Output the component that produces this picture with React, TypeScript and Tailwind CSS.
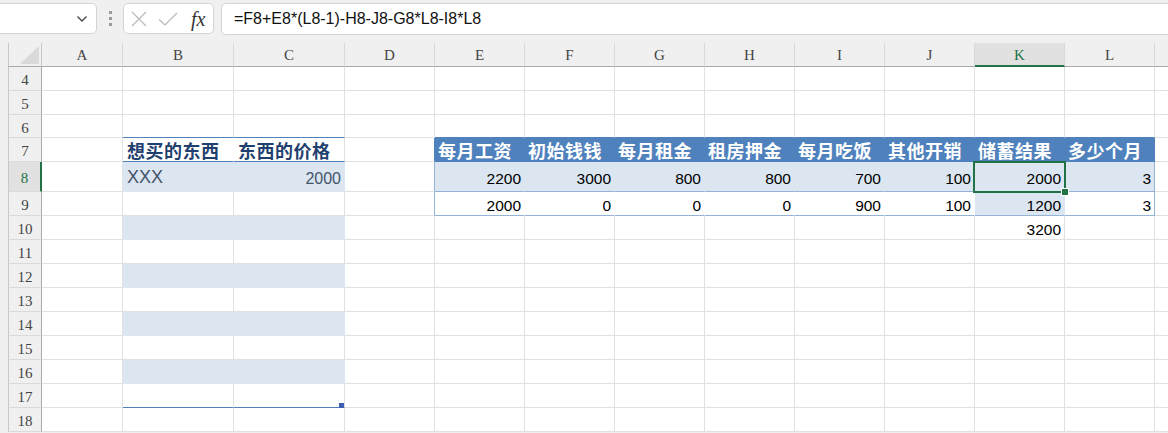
import React from "react";

interface Col {
    key: string;
    w: number;
}

interface Row {
    n: number;
    h: number;
}

const COLS: Col[] = [
    { key: "A", w: 81 },
    { key: "B", w: 111 },
    { key: "C", w: 111 },
    { key: "D", w: 90 },
    { key: "E", w: 90 },
    { key: "F", w: 90 },
    { key: "G", w: 90 },
    { key: "H", w: 90 },
    { key: "I", w: 90 },
    { key: "J", w: 90 },
    { key: "K", w: 90 },
    { key: "L", w: 90 },
];

const ROWS: Row[] = [
    { n: 4, h: 24 },
    { n: 5, h: 24 },
    { n: 6, h: 23 },
    { n: 7, h: 24 },
    { n: 8, h: 30 },
    { n: 9, h: 24 },
    { n: 10, h: 24 },
    { n: 11, h: 24 },
    { n: 12, h: 24 },
    { n: 13, h: 24 },
    { n: 14, h: 24 },
    { n: 15, h: 24 },
    { n: 16, h: 24 },
    { n: 17, h: 24 },
    { n: 18, h: 24 },
];

const TABLE_COLS = ["E", "F", "G", "H", "I", "J", "K", "L"];
const HEADERS = ["每月工资", "初始钱钱", "每月租金", "租房押金", "每月吃饭", "其他开销", "储蓄结果", "多少个月"];
const ROW8 = ["2200", "3000", "800", "800", "700", "100", "2000", "3"];
const ROW9 = ["2000", "0", "0", "0", "900", "100", "1200", "3"];

const GRID = "#e1e1e1";
const BLUE = "#4f81bd";
const LIGHT = "#dce6f1";
const LINE = "#95b3d7";

type Kind = "head" | "num" | "text" | "bcHead" | "none";

interface CellInfo {
    bg: string;
    br: string;
    bb: string;
    text?: string;
    kind: Kind;
    color?: string;
    size?: string;
}

function getCell(r: number, c: string): CellInfo {
    const cell: CellInfo = { bg: "#ffffff", br: GRID, bb: GRID, kind: "none" };
    const inBC = c === "B" || c === "C";
    const ti = TABLE_COLS.indexOf(c);

    // left-hand list (B/C)
    if (inBC) {
        if (r === 6) cell.bb = BLUE;
        if (r === 7) {
            cell.bb = BLUE;
            if (c === "B") cell.br = "#ffffff";
            cell.kind = "bcHead";
            cell.text = c === "B" ? "想买的东西" : "东西的价格";
        }
        if ([8, 10, 12, 14, 16].includes(r)) {
            cell.bg = LIGHT;
            cell.br = LIGHT;
            cell.bb = LIGHT;
        }
        if (r === 8) {
            cell.text = c === "B" ? "XXX" : "2000";
            cell.kind = c === "B" ? "text" : "num";
            cell.color = "#44546a";
            cell.size = c === "B" ? "text-[18px]" : "text-[16px]";
        }
        if (r === 17) cell.bb = BLUE;
    }

    // table edge on column D
    if (c === "D") {
        if (r === 7) cell.br = BLUE;
        if (r === 8 || r === 9) cell.br = LINE;
    }

    // main table E..L
    if (ti >= 0) {
        if (r === 6) cell.bb = BLUE;
        if (r === 7) {
            cell.bg = BLUE;
            cell.br = BLUE;
            cell.bb = BLUE;
            cell.kind = "head";
            cell.text = HEADERS[ti];
        }
        if (r === 8) {
            cell.bg = LIGHT;
            cell.br = c === "L" ? LINE : LIGHT;
            cell.bb = LINE;
            cell.kind = "num";
            cell.text = ROW8[ti];
        }
        if (r === 9) {
            const k = c === "K";
            cell.bg = k ? LIGHT : "#ffffff";
            cell.br = c === "L" ? LINE : k ? LIGHT : "#ffffff";
            cell.bb = LINE;
            cell.kind = "num";
            cell.text = ROW9[ti];
        }
        if (r === 10 && c === "K") {
            cell.kind = "num";
            cell.text = "3200";
        }
    }
    return cell;
}

function Cell({ r, col, h }: { r: number; col: Col; h: number }) {
    const info = getCell(r, col.key);
    const selected = r === 8 && col.key === "K";
    const handle = r === 17 && col.key === "C";

    let content: React.ReactNode = null;
    if (info.kind === "head") {
        content = (
            <span className="pl-[3px] text-[18px] font-bold text-white font-['Noto_Sans_CJK_SC',sans-serif] leading-none tracking-[0.5px]">
                {info.text}
            </span>
        );
    } else if (info.kind === "bcHead") {
        content = (
            <span className="pl-[4px] text-[18px] font-bold text-[#1f3f6e] font-['Noto_Sans_CJK_SC',sans-serif] leading-none tracking-[0.5px]">
                {info.text}
            </span>
        );
    } else if (info.kind === "num") {
        content = (
            <span
                className={`ml-auto pr-[3px] font-['Liberation_Sans',sans-serif] leading-none pt-[4px] ${info.size ?? "text-[15.5px]"}`}
                style={{ color: info.color ?? "#000000" }}
            >
                {info.text}
            </span>
        );
    } else if (info.kind === "text") {
        content = (
            <span
                className={`pl-[4px] font-['Liberation_Sans',sans-serif] leading-none pt-[1px] ${info.size}`}
                style={{ color: info.color }}
            >
                {info.text}
            </span>
        );
    }

    return (
        <div
            className={`relative flex shrink-0 items-center border-r border-b whitespace-nowrap ${selected || handle ? "z-10" : ""}`}
            style={{
                width: col.w,
                height: h,
                backgroundColor: info.bg,
                borderRightColor: info.br,
                borderBottomColor: info.bb,
            }}
        >
            {content}
            {selected && (
                <div className="absolute top-[-1px] left-[-2px] w-[93px] h-[32px] border-2 border-[#217346] pointer-events-none">
                    <div className="absolute right-[-4px] bottom-[-4px] w-[6px] h-[6px] bg-[#217346] outline outline-1 outline-white" />
                </div>
            )}
            {handle && <div className="absolute right-[0px] bottom-[-1px] w-[5px] h-[5px] bg-[#3e5fb3]" />}
        </div>
    );
}

function FormulaBar() {
    return (
        <div className="h-[35px] flex items-start pt-[3px] bg-[#f0f0f0]">
            {/* Name box */}
            <div className="ml-[-6px] w-[103px] h-[31px] bg-white border border-[#d4d4d4] rounded-[5px] flex items-center justify-end pr-[8px]">
                <svg width="12" height="8" viewBox="0 0 12 8" fill="none">
                    <path d="M1.5 1.5 L6 6 L10.5 1.5" stroke="#444" strokeWidth="1.3" />
                </svg>
            </div>
            {/* grip dots */}
            <div className="w-[26px] h-[31px] flex flex-col items-center justify-center gap-[3px]">
                <div className="w-[3px] h-[3px] bg-[#9a9a9a]" />
                <div className="w-[3px] h-[3px] bg-[#9a9a9a]" />
                <div className="w-[3px] h-[3px] bg-[#9a9a9a]" />
            </div>
            {/* cancel / enter / fx */}
            <div className="w-[91px] h-[31px] bg-white border border-[#d4d4d4] rounded-[5px] flex items-center pl-[7px]">
                <svg width="16" height="16" viewBox="0 0 16 16" fill="none">
                    <path d="M1 1 L15 15 M15 1 L1 15" stroke="#b9b9b9" strokeWidth="1.2" />
                </svg>
                <svg width="20" height="16" viewBox="0 0 20 16" fill="none" className="ml-[11px]">
                    <path d="M1 8.5 L7 14 L19 2" stroke="#b9b9b9" strokeWidth="1.2" />
                </svg>
                <span className="ml-[13px] text-[20px] italic font-['Liberation_Serif',serif] text-[#333] leading-none">
                    fx
                </span>
            </div>
            {/* formula input */}
            <div className="ml-[7px] flex-1 mr-[-8px] h-[32px] bg-white border border-[#d4d4d4] rounded-[5px] flex items-center pl-[12px]">
                <span className="text-[16px] font-['Liberation_Sans',sans-serif] text-[#111]">
                    =F8+E8*(L8-1)-H8-J8-G8*L8-I8*L8
                </span>
            </div>
        </div>
    );
}

export default function App() {
    return (
        <div className="w-[1168px] h-[433px] overflow-hidden bg-[#f0f0f0]">
            <FormulaBar />
            <div className="h-[8px]" />

            <div className="pl-[8px]">
                {/* Column header row */}
                <div className="flex h-[24px]">
                    <div className="w-[34px] shrink-0 h-[24px] border-l border-r border-b border-l-[#c8c8c8] border-r-[#c8c8c8] border-b-[#a9a9a9] flex items-end justify-end pr-[2px] pb-[2px]">
                        <svg width="19" height="18" viewBox="0 0 19 18">
                            <polygon points="19,0 19,18 0,18" fill="#d9d9d9" />
                        </svg>
                    </div>
                    {COLS.map((col) => {
                        const sel = col.key === "K";
                        return (
                            <div
                                key={col.key}
                                className={`shrink-0 h-[24px] border-r border-r-[#d9d9d9] flex items-center justify-center text-[15px] font-['Liberation_Serif',serif] leading-none pt-[2px] ${
                                    sel
                                        ? "bg-[#e1e1e1] border-b-2 border-b-[#217346] text-[#217346]"
                                        : "border-b border-b-[#a9a9a9] text-[#444]"
                                }`}
                                style={{ width: col.w }}
                            >
                                {col.key}
                            </div>
                        );
                    })}
                    <div className="flex-1 h-[24px] border-b border-b-[#a9a9a9]" />
                </div>

                {/* Rows */}
                {ROWS.map((row) => {
                    const sel = row.n === 8;
                    return (
                        <div key={row.n} className="flex" style={{ height: row.h }}>
                            <div
                                className={`w-[34px] shrink-0 border-l border-l-[#c8c8c8] border-b border-b-[#dadada] flex items-center justify-center text-[15px] font-['Liberation_Serif',serif] leading-none pt-[4px] ${
                                    sel
                                        ? "bg-[#e1e1e1] border-r-2 border-r-[#217346] text-[#217346]"
                                        : "border-r border-r-[#a9a9a9] text-[#444]"
                                }`}
                            >
                                {row.n}
                            </div>
                            {COLS.map((col) => (
                                <Cell key={col.key} r={row.n} col={col} h={row.h} />
                            ))}
                            <div className="flex-1 bg-white border-b" style={{ borderBottomColor: GRID }} />
                        </div>
                    );
                })}
            </div>
        </div>
    );
}
